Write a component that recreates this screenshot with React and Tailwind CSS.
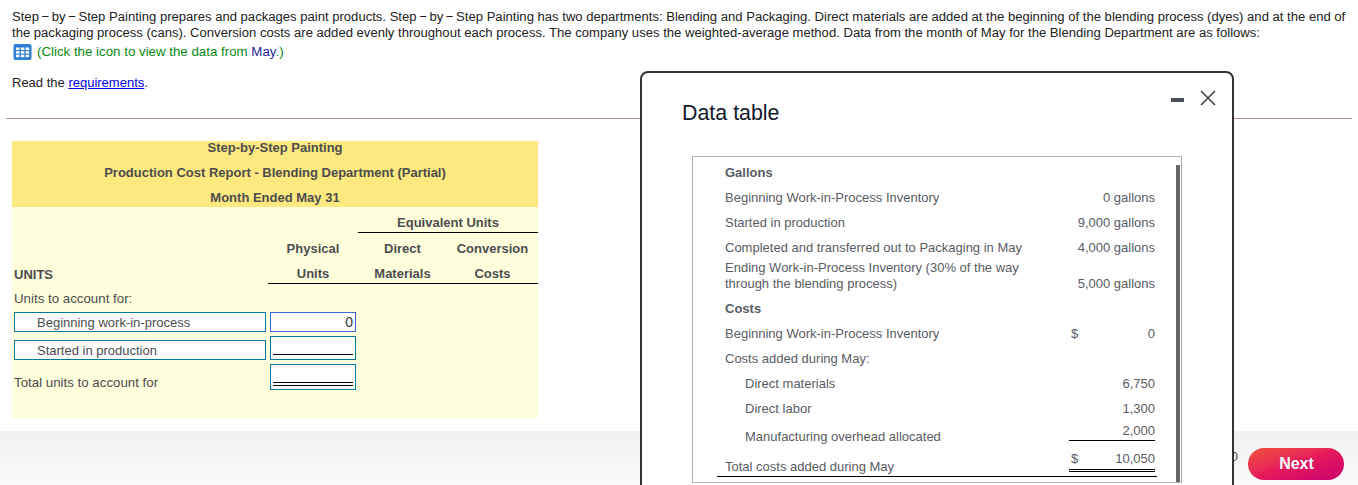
const font = "font-['Liberation_Sans',Arial,sans-serif]"

const intro = 'Step\u2009−\u2009by\u2009−\u2009Step Painting prepares and packages paint products. Step\u2009−\u2009by\u2009−\u2009Step Painting has two departments: Blending and Packaging. Direct materials are added at the beginning of the blending process (dyes) and at the end of the packaging process (cans). Conversion costs are added evenly throughout each process. The company uses the weighted-average method. Data from the month of May for the Blending Department are as follows:'

const CostRow = ({ label, sign, value, className = 'h-[25px] items-center', labelClass = '', valueClass = '', indent, bold }) => (
  <div className={`grid grid-cols-[344px_86px] pl-[32px] ${className}`}>
    <div className={`${indent ? 'pl-5' : ''} ${bold ? 'font-bold' : ''} ${labelClass}`}>{label}</div>
    <div className={`flex justify-between ${valueClass}`}>
      <span className="pl-[2px]">{sign}</span>
      <span>{value}</span>
    </div>
  </div>
)

const GridIcon = () => (
  <svg width="19" height="16" viewBox="0 0 19 16" className="shrink-0 ml-[1px]">
    <rect x="0.5" y="0" width="18" height="16" rx="2" fill="#2f7fd6" />
    <g fill="#fff">
      <rect x="3" y="3.5" width="3.5" height="2.5" />
      <rect x="7.8" y="3.5" width="3.5" height="2.5" />
      <rect x="12.6" y="3.5" width="3.5" height="2.5" />
      <rect x="3" y="7.1" width="3.5" height="2.5" />
      <rect x="7.8" y="7.1" width="3.5" height="2.5" />
      <rect x="12.6" y="7.1" width="3.5" height="2.5" />
      <rect x="3" y="10.7" width="3.5" height="2.5" />
      <rect x="7.8" y="10.7" width="3.5" height="2.5" />
      <rect x="12.6" y="10.7" width="3.5" height="2.5" />
    </g>
  </svg>
)

const DataModal = () => (
  <div className="absolute left-[640px] top-[71px] w-[594px] h-[430px] bg-white border-2 border-[#333] rounded-lg">
    <div className="absolute right-[16px] top-[17px] flex items-center gap-[16px]">
      <div className="w-[13px] h-[4px] mt-[3px] bg-[#4a4f57]" />
      <svg width="16" height="16" viewBox="0 0 16 16" fill="none" stroke="#3f454d" strokeWidth="1.6">
        <path d="M1 1l14 14M15 1L1 15" />
      </svg>
    </div>
    <h2 className="pl-[40px] pt-[27px] text-[21.4px] leading-[26px] text-[#10182a]">Data table</h2>
    <div className="relative ml-[50px] mt-[30px] w-[490px] h-[327px] border border-[#b3b3b3] pt-[3px] text-[13px] leading-[15px] text-[#595c63]">
      <div className="absolute right-[1px] top-[8px] bottom-0 w-[4px] bg-[#666]" />
      <div className="pl-[32px] h-[25px] leading-[25px] font-bold">Gallons</div>
      <CostRow label="Beginning Work-in-Process Inventory" value="0 gallons" />
      <CostRow label="Started in production" value="9,000 gallons" />
      <CostRow label="Completed and transferred out to Packaging in May" value="4,000 gallons" />
      <CostRow
        label={<span className="block leading-[16px] w-[310px]">Ending Work-in-Process Inventory (30% of the way through the blending process)</span>}
        value="5,000 gallons"
        className="h-[36px] items-end leading-[16px] pb-[5px]"
      />
      <CostRow label="Costs" bold />
      <CostRow label="Beginning Work-in-Process Inventory" sign="$" value="0" />
      <CostRow label="Costs added during May:" />
      <CostRow label="Direct materials" value="6,750" indent />
      <CostRow label="Direct labor" value="1,300" indent />
      <CostRow
        label="Manufacturing overhead allocated"
        value="2,000"
        indent
        className="h-[20px] items-end"
        labelClass="-mb-[3px]"
        valueClass="border-b border-black pb-[2px]"
      />
      <div className="relative">
        <CostRow
          label="Total costs added during May"
          sign="$"
          value="10,050"
          className="h-[36px] items-end"
          labelClass="mb-[3px]"
          valueClass="border-b-[3px] border-double border-black pb-[3px] mb-[5px]"
        />
        <div className="absolute left-[24px] w-[440px] bottom-0 h-px bg-black" />
      </div>
    </div>
  </div>
)

export default function App() {
  return (
    <div className={`relative h-[485px] overflow-hidden bg-white text-[13px] ${font}`}>
      <div className="px-3 pt-[9px] leading-4 text-[#222]">
        <p className="text-[13.08px]">{intro}</p>
        <p className="flex items-center gap-[5px] mt-[1px] h-[19px] text-[13.3px] text-[#0a8a14]">
          <GridIcon />
          <span>(Click the icon to view the data from <span className="text-[#2a1a9a]">May</span>.)</span>
        </p>
        <p className="mt-[14px]">
          Read the <a className="text-[#0000ee] underline">requirements</a>.
        </p>
      </div>
      <div className="mx-[6px] mt-[27px] h-px bg-[#c08a9e]" />

      <div className="ml-3 mt-[22px] w-[526px] h-[277px] bg-[#ffffdd] text-[#4d4d4d]">
        <div className="h-[66px] bg-[#fde97f] text-center font-bold leading-[25px]">
          <div className="-translate-y-[6px]">Step-by-Step Painting</div>
          <div className="-translate-y-[6px]">Production Cost Report - Blending Department (Partial)</div>
          <div className="-translate-y-[6px]">Month Ended May 31</div>
        </div>
        <div className="grid grid-cols-[256px_90px_89px_91px] font-bold text-center leading-[32px]">
          <div className="col-start-3 col-span-2 h-[26px] border-b border-black">Equivalent Units</div>
          <div className="col-start-2 h-[25px]">Physical</div>
          <div className="h-[25px]">Direct</div>
          <div className="h-[25px]">Conversion</div>
          <div className="text-left pl-[2px] h-[26px] pt-px">UNITS</div>
          <div className="col-span-3 grid grid-cols-[90px_89px_91px] h-[26px] border-b border-black">
            <div>Units</div>
            <div>Materials</div>
            <div>Costs</div>
          </div>
        </div>
        <div className="pl-[2px] leading-[30px] h-[28px] text-[13.3px]">Units to account for:</div>
        <div className="flex gap-[4px] h-[24px]">
          <div className="ml-[2px] w-[252px] h-[20px] bg-white border border-[#007a9c] pl-[22px] leading-[20px]">Beginning work-in-process</div>
          <div className="w-[86px] h-[20px] bg-white border border-[#3b68d8] text-right pr-[2px] text-[14px] leading-[18px] text-[#333]">0</div>
        </div>
        <div className="flex gap-[4px] h-[28px]">
          <div className="ml-[2px] w-[252px] h-[20px] mt-[4px] bg-white border border-[#007a9c] pl-[22px] leading-[20px]">Started in production</div>
          <div className="w-[86px] h-[24px] bg-white border border-[#007a9c] px-[2px] pt-[17px]">
            <div className="h-px bg-black" />
          </div>
        </div>
        <div className="flex gap-[4px]">
          <div className="ml-[2px] w-[252px] h-[26px] leading-[37px] text-[13.3px]">Total units to account for</div>
          <div className="w-[86px] h-[26px] bg-white border border-[#007a9c] px-[2px] pt-[17px]">
            <div className="h-[4px] border-y border-black" />
          </div>
        </div>
      </div>

      <div className="mt-[13px] h-[54px] bg-gradient-to-b from-[#f0f0f0] to-[#fafafa] flex justify-end items-start pt-[17px] pr-[14px]">
        <div className="text-[#555] leading-4 mr-[10px] mt-[1px]">0</div>
        <button className="w-[96px] h-[32px] pl-[1px] rounded-full bg-gradient-to-br from-[#f04e37] via-[#e6175c] to-[#c8006e] text-white font-bold text-[16px]">Next</button>
      </div>

      <DataModal />
    </div>
  )
}
